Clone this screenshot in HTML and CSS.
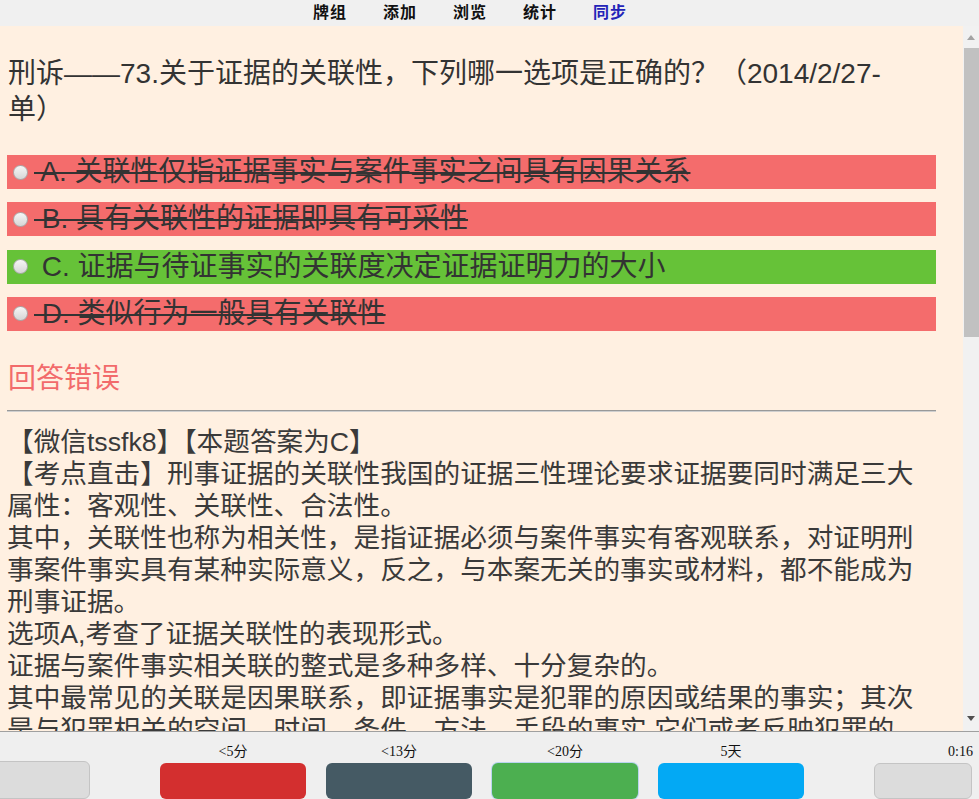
FILE: index.html
```
<!DOCTYPE html>
<html lang="zh-CN">
<head>
	<meta charset="UTF-8">
	<meta name="viewport" content="width=device-width, initial-scale=1.0">
	<title>Reviewer</title>
	<link rel="stylesheet" href="styles.css">
</head>
<body>
	<div class="app">
		<nav class="topbar">
			<a class="nav-link">牌组</a>
			<a class="nav-link">添加</a>
			<a class="nav-link">浏览</a>
			<a class="nav-link">统计</a>
			<a class="nav-link nav-sync">同步</a>
		</nav>

		<div class="viewport">
			<div class="card">
				<div class="question">刑诉——73.关于证据的关联性，下列哪一选项是正确的？（2014/2/27-单）</div>

				<div class="options">
					<div class="option option-wrong">
						<span class="radio"></span>
						<span class="option-text"> A. 关联性仅指证据事实与案件事实之间具有因果关系</span>
					</div>
					<div class="option option-wrong">
						<span class="radio"></span>
						<span class="option-text"> B. 具有关联性的证据即具有可采性</span>
					</div>
					<div class="option option-right">
						<span class="radio"></span>
						<span class="option-text"> C. 证据与待证事实的关联度决定证据证明力的大小</span>
					</div>
					<div class="option option-wrong">
						<span class="radio"></span>
						<span class="option-text"> D. 类似行为一般具有关联性</span>
					</div>
				</div>

				<div class="verdict">回答错误</div>
				<hr class="divider">

				<div class="explain">
					【微信tssfk8】【本题答案为C】<br>
					【考点直击】刑事证据的关联性我国的证据三性理论要求证据要同时满足三大属性：客观性、关联性、合法性。<br>
					其中，关联性也称为相关性，是指证据必须与案件事实有客观联系，对证明刑事案件事实具有某种实际意义，反之，与本案无关的事实或材料，都不能成为刑事证据。<br>
					选项A,考查了证据关联性的表现形式。<br>
					证据与案件事实相关联的整式是多种多样、十分复杂的。<br>
					其中最常见的关联是因果联系，即证据事实是犯罪的原因或结果的事实；其次是与犯罪相关的空间、时间、条件、方法、手段的事实,它们或者反映犯罪的人、事、物，或者反映犯罪的过程与结果。<br>
					因此，关联性并不仅指因果关系，选项A错误。
				</div>
			</div>

			<div class="scrollbar">
				<span class="scroll-arrow arrow-up"></span>
				<div class="scroll-track">
					<div class="scroll-thumb"></div>
				</div>
				<span class="scroll-arrow arrow-down"></span>
			</div>
		</div>

		<div class="answer-bar">
			<div class="ans-col ans-side ans-first">
				<div class="ans-label"></div>
				<div class="ans-btn btn-gray"></div>
			</div>
			<div class="ans-col">
				<div class="ans-label">&lt;5分</div>
				<div class="ans-btn btn-again"></div>
			</div>
			<div class="ans-col">
				<div class="ans-label">&lt;13分</div>
				<div class="ans-btn btn-hard"></div>
			</div>
			<div class="ans-col">
				<div class="ans-label">&lt;20分</div>
				<div class="ans-btn btn-good"></div>
			</div>
			<div class="ans-col">
				<div class="ans-label">5天</div>
				<div class="ans-btn btn-easy"></div>
			</div>
			<div class="ans-col ans-side ans-last">
				<div class="ans-label ans-timer">0:16</div>
				<div class="ans-btn btn-gray"></div>
			</div>
		</div>
	</div>
</body>
</html>
```

FILE: styles.css
```
body {
	margin: 0;
	font-family: "Liberation Sans", "Noto Sans CJK SC", sans-serif;
	color: #333;
	background-color: #efefef;
	overflow: hidden;
}
.app {
	height: 100vh;
	display: flex;
	flex-direction: column;
}
.topbar {
	height: 26px;
	flex-shrink: 0;
	display: flex;
	justify-content: center;
	align-items: center;
	gap: 36px;
	padding-right: 39px;
	padding-bottom: 5px;
	box-sizing: border-box;
	background-color: #f0f0f0;
}
.nav-link {
	font-family: "Noto Sans CJK SC", sans-serif;
	font-size: 16px;
	font-weight: 700;
	letter-spacing: 1px;
	line-height: 18px;
	color: #111;
}
.nav-sync { color: #2323b8; }
.viewport {
	flex: 1;
	min-height: 0;
	display: flex;
}
.card {
	flex: 1;
	min-width: 0;
	overflow: hidden;
	background-color: #fff0e1;
	padding: 30px 27px 0 7px;
}
.question {
	font-size: 28px;
	line-height: 36px;
	padding-left: 1px;
	padding-right: 20px;
	margin-bottom: 27px;
}
.options {
	display: flex;
	flex-direction: column;
	gap: 13.3px;
}
.option {
	height: 34px;
	display: flex;
	align-items: center;
	font-size: 28px;
	line-height: 34px;
	white-space: pre;
}
.option-wrong { background-color: #f46c6c; }
.option-wrong .option-text {
	text-decoration: line-through;
	text-decoration-thickness: 2px;
}
.option-right { background-color: #66c238; }
.radio {
	width: 15px;
	height: 15px;
	margin: 0 6px;
	flex-shrink: 0;
	border-radius: 50%;
	border: 1px solid #a9a9a9;
	box-sizing: border-box;
	background: linear-gradient(180deg, #f6f6f6, #d6d6d6);
}
.verdict {
	margin-top: 30px;
	font-size: 28px;
	line-height: 36px;
	padding-left: 1px;
	color: #f26b6b;
}
.divider {
	margin: 13px 0 0;
	border: none;
	border-top: 1px solid #999;
	border-bottom: 1px solid #cfcfcf;
}
.explain {
	margin-top: 14px;
	font-size: 26.67px;
	line-height: 32px;
	color: #3a3a3a;
}
.scrollbar {
	width: 16px;
	flex-shrink: 0;
	display: flex;
	flex-direction: column;
	align-items: center;
	background-color: #f1f1f1;
}
.scroll-arrow {
	width: 0;
	height: 0;
	border-left: 4px solid transparent;
	border-right: 4px solid transparent;
}
.arrow-up {
	margin: 9px 0 8px;
	border-bottom: 5px solid #a3a3a3;
}
.arrow-down {
	margin: 8px 0 10px;
	border-top: 5px solid #505050;
}
.scroll-track {
	flex: 1;
	width: 100%;
	padding-left: 1px;
	box-sizing: border-box;
}
.scroll-thumb {
	height: 289px;
	background-color: #c1c1c1;
}
.answer-bar {
	height: 68px;
	flex-shrink: 0;
	box-sizing: border-box;
	border-top: 1px solid #a0a0a0;
	background-color: #efefef;
	display: flex;
	gap: 20px;
	padding-top: 12px;
	margin-left: -8px;
	overflow: hidden;
}
.ans-col {
	width: 146px;
	flex-shrink: 0;
	display: flex;
	flex-direction: column;
}
.ans-side { width: 98px; }
.ans-first { margin-right: 50px; }
.ans-last { margin-left: 50px; }
.ans-label {
	height: 16px;
	font-family: "Liberation Serif", "Noto Sans CJK SC", serif;
	font-size: 14px;
	line-height: 16px;
	text-align: center;
	color: #111;
}
.ans-timer {
	text-align: right;
	margin-right: -1px;
}
.ans-btn {
	height: 44px;
	margin-top: 3px;
	border-radius: 6px;
	box-sizing: border-box;
}
.btn-gray {
	background-color: #dcdcdc;
	border: 1px solid #c4c4c4;
}
.btn-again { background-color: #d32f2f; }
.btn-hard { background-color: #455a64; }
.btn-good {
	background-color: #4caf50;
	box-shadow: 0 0 0 1px #b9d4ef;
}
.btn-easy { background-color: #03a9f4; }
```
